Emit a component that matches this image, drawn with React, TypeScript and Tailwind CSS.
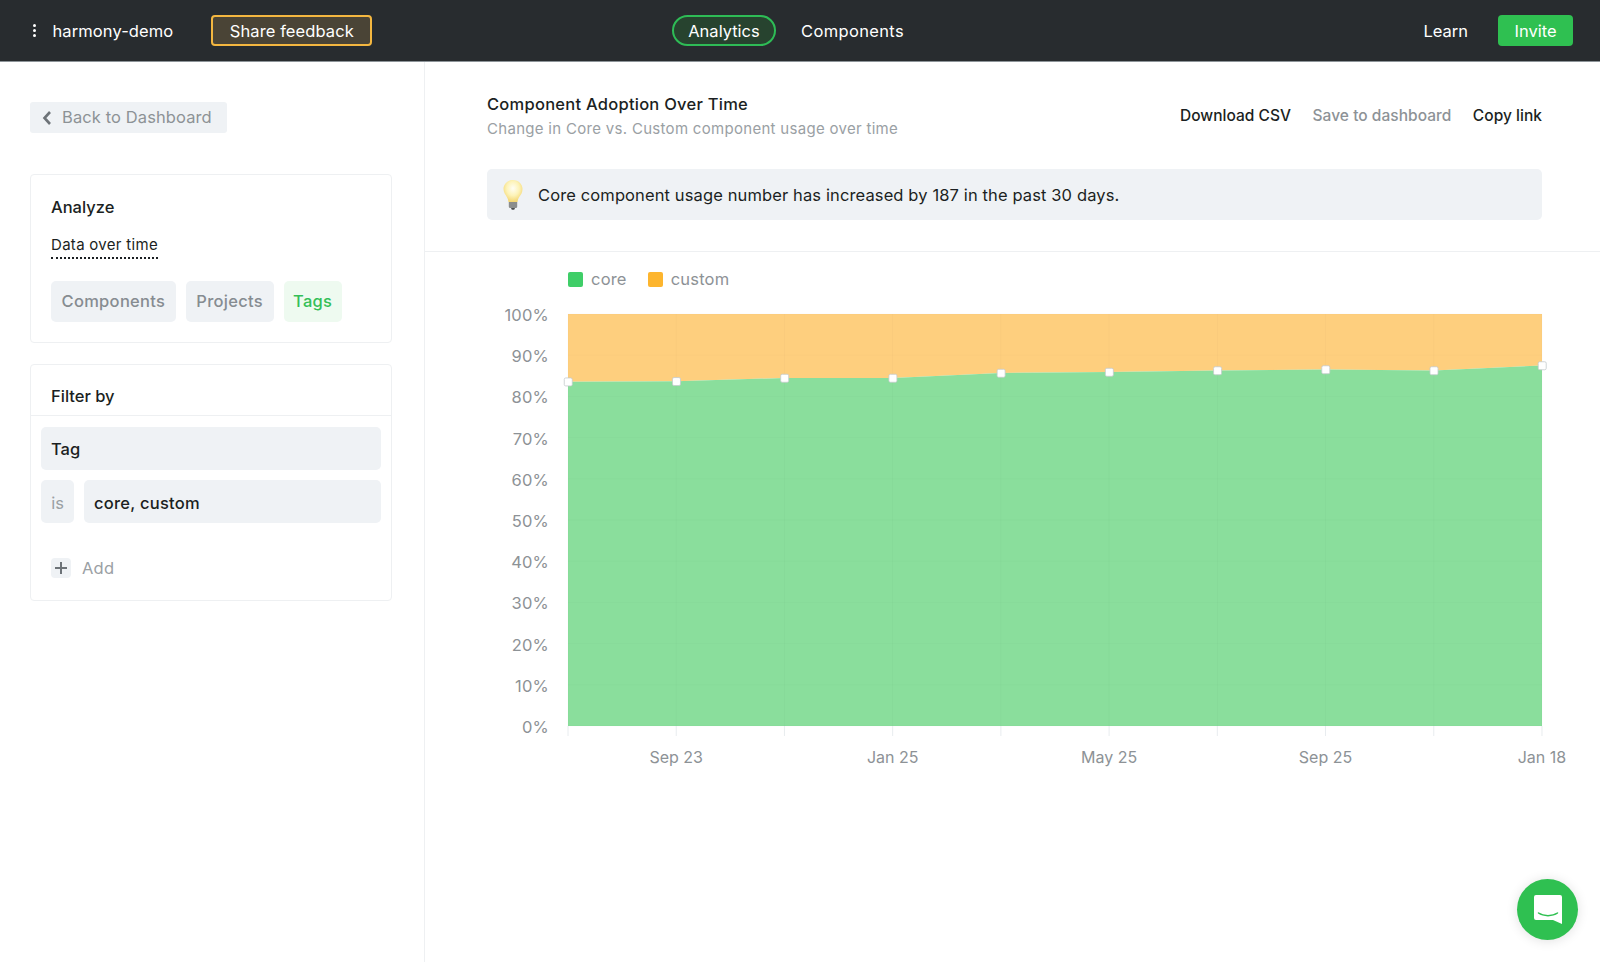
import React from "react";

const font = { fontFamily: "Inter, 'Liberation Sans', sans-serif" };
const xs = Array.from({ length: 10 }, (_, i) => 568 + i * 108.22);
const ys = [381.7, 381.3, 378, 378, 373, 372, 370.5, 369.5, 370.5, 365.5];
const x0 = 568;
const x1 = 1542;
const yTop = 314;
const yBot = 726;
const line = xs.map((x, i) => `${x},${ys[i]}`).join(" ");
const yLabels = ["100%", "90%", "80%", "70%", "60%", "50%", "40%", "30%", "20%", "10%", "0%"];
const xLabels: [number, string][] = [[1, "Sep 23"], [3, "Jan 25"], [5, "May 25"], [7, "Sep 25"], [9, "Jan 18"]];

function Chart() {
  return (
    <svg width="1175" height="500" viewBox="425 294 1175 500" className="block">
      <polygon points={`${x0},${yTop} ${x1},${yTop} ${x1},${ys[9]} ${[...xs].reverse().map((x, i) => `${x},${ys[9 - i]}`).join(" ")}`} fill="#fecf7e" />
      <polygon points={`${line} ${x1},${yBot} ${x0},${yBot}`} fill="#8ade9c" />
      {yLabels.map((_, i) => (
        <line key={i} x1={x0} x2={x1} y1={yTop + i * 41.2} y2={yTop + i * 41.2} stroke="#000" strokeOpacity="0.015" />
      ))}
      {xs.map((x, i) => (
        <g key={i}>
          <line x1={x} x2={x} y1={yTop} y2={yBot} stroke="#000" strokeOpacity="0.02" />
          <line x1={x} x2={x} y1={yBot} y2={yBot + 10} stroke="#e8ecef" />
        </g>
      ))}
      {yLabels.map((t, i) => (
        <text key={t} x="549" y={yTop + i * 41.2 + 7} textAnchor="end" fontSize="16.5" letterSpacing="0.2" fill="#8d9296" style={font}>{t}</text>
      ))}
      {xLabels.map(([i, t]) => (
        <text key={t} x={xs[i]} y="763" textAnchor="middle" fontSize="16" fill="#8d9296" style={font}>{t}</text>
      ))}
      {xs.map((x, i) => (
        <rect key={i} x={x - 3.75} y={ys[i] - 3.75} width="8" height="8" rx="1.5" fill="#fff" stroke="#c4cacd" strokeWidth="0.8" />
      ))}
    </svg>
  );
}

function Bulb() {
  return (
    <svg width="22" height="32" viewBox="0 0 22 32">
      <defs>
        <radialGradient id="bulb" cx="50%" cy="38%" r="60%">
          <stop offset="0%" stopColor="#fffef4" />
          <stop offset="55%" stopColor="#fdf3b8" />
          <stop offset="100%" stopColor="#f4d774" />
        </radialGradient>
      </defs>
      <path d="M11 1C5.500 1 1.500 5 1.500 10c0 3.600 2.300 6 3.600 8.400.9 1.600 1.200 3 1.400 4.600h9c.2-1.600.5-3 1.400-4.600C18.800 16 20.500 13.600 20.500 10 20.500 5 16.500 1 11 1z" fill="url(#bulb)" />
      <path d="M6.800 23h8.400v4.500c0 1-.8 1.500-1.700 1.500h-5c-.9 0-1.700-.5-1.700-1.500z" fill="#8b8d8c" />
      <path d="M9 29h4l-.8 1.800H9.800z" fill="#4b4d4e" />
    </svg>
  );
}

export default function App() {
  return (
    <div className="w-[1600px] h-[962px] overflow-hidden bg-white text-[#1b1f22] flex flex-col" style={font}>
      <header className="h-[62px] shrink-0 bg-[#282c2f] border-b border-[#8d9499] flex items-center text-white text-[16.5px] relative">
        <div className="flex items-center w-[620px] pl-[33px]">
          <span className="flex flex-col gap-[2.5px] mr-[17px]">
            <i className="block size-[2.5px] rounded-full bg-white" />
            <i className="block size-[2.5px] rounded-full bg-white" />
            <i className="block size-[2.5px] rounded-full bg-white" />
          </span>
          <span className="tracking-[0.1px] pt-[1px]">harmony-demo</span>
          <span className="ml-[38px] h-[31px] w-[161px] flex items-center justify-center rounded-[4px] border-2 border-[#f4b740] bg-[#4a4436] tracking-[0.1px] pt-[1px]">Share feedback</span>
        </div>
        <div className="flex items-center ml-[52px]">
          <span className="h-[31px] w-[104px] flex items-center justify-center rounded-full border-2 border-[#2ebc56] bg-[#27432f] pt-[1px]">Analytics</span>
          <span className="ml-[25px] tracking-[0.35px] pt-[1px]">Components</span>
        </div>
        <div className="ml-auto flex items-center pr-[27px]">
          <span className="pt-[1px]">Learn</span>
          <span className="ml-[30px] h-[31px] w-[75px] flex items-center justify-center rounded-[4px] bg-[#2fc051] pt-[1px]">Invite</span>
        </div>
      </header>

      <div className="flex flex-1 min-h-0">
        <aside className="w-[425px] shrink-0 border-r border-[#eef0f2] pt-[40px] pl-[30px] pr-[32px]">
          <div className="h-[31px] w-[197px] rounded-[3px] bg-[#eff2f5] flex items-center text-[#8d9296] text-[16.5px] tracking-[0.1px]">
            <svg width="12" height="16" viewBox="0 0 12 16" className="ml-[11px] mr-[9px]" fill="none" stroke="#6d7378" strokeWidth="2.600">
              <path d="M9 2 3.500 8 9 14" />
            </svg>
            Back to Dashboard
          </div>

          <section className="mt-[41px] h-[169px] rounded-[4px] border border-[#eef0f2] px-[21px] pt-[22px]">
            <div className="text-[16.5px] font-medium leading-[20px] -ml-[1px]">Analyze</div>
            <div className="mt-[18px] -ml-[1px] w-fit text-[15px] leading-[20px] tracking-[0.3px] border-b-2 border-dotted border-[#1b1f22] pb-[2px]">Data over time</div>
            <div className="mt-[22px] -ml-[1px] flex gap-[10px] text-[16.5px] font-medium tracking-[0.3px]">
              <span className="h-[41px] px-[10.5px] flex items-center rounded-[5px] bg-[#eff2f5] text-[#868c91]">Components</span>
              <span className="h-[41px] px-[10.5px] flex items-center rounded-[5px] bg-[#eff2f5] text-[#868c91]">Projects</span>
              <span className="h-[41px] px-[9.5px] flex items-center rounded-[5px] bg-[#eefaf0] text-[#34bf58]">Tags</span>
            </div>
          </section>

          <section className="mt-[21px] h-[237px] rounded-[4px] border border-[#eef0f2]">
            <div className="h-[51px] border-b border-[#eef0f2] px-[20px] pt-[21px] text-[16.5px] font-medium leading-[20px]">Filter by</div>
            <div className="px-[10px] pt-[11px] flex flex-col gap-[10px] text-[16.5px] font-medium">
              <div className="h-[43px] rounded-[5px] bg-[#eff2f5] flex items-center px-[10px] pt-[2px]">Tag</div>
              <div className="flex gap-[10px]">
                <div className="h-[43px] w-[33px] rounded-[5px] bg-[#eff2f5] flex items-center justify-center font-normal text-[#9aa0a4] pt-[3px]">is</div>
                <div className="h-[43px] flex-1 rounded-[5px] bg-[#eff2f5] flex items-center px-[10px] tracking-[0.25px] pt-[3px]">core, custom</div>
              </div>
            </div>
            <div className="mt-[33px] ml-[20px] flex items-center gap-[11px] text-[#9aa0a4] text-[16.5px] tracking-[0.2px]">
              <span className="size-[20px] rounded-[4px] bg-[#eff2f5] flex items-center justify-center">
                <svg width="12" height="12" viewBox="0 0 12 12" stroke="#6d7378" strokeWidth="2"><path d="M6 0v12M0 6h12" /></svg>
              </span>
              <span>Add</span>
            </div>
          </section>
        </aside>

        <main className="flex-1 min-w-0 relative">
          <div className="h-[190px] border-b border-[#eef0f2] pl-[62px] pr-[58px] pt-[32px]">
            <div className="flex justify-between items-center">
              <div>
                <div className="text-[16.5px] font-medium leading-[20px] tracking-[0.25px]">Component Adoption Over Time</div>
                <div className="mt-[5px] text-[15px] leading-[20px] tracking-[0.3px] text-[#9aa0a4]">Change in Core vs. Custom component usage over time</div>
              </div>
              <div className="flex gap-[21.5px] text-[15.5px] font-medium tracking-[0.03px] -mt-[2px]">
                <span>Download CSV</span>
                <span className="text-[#8d9296]">Save to dashboard</span>
                <span>Copy link</span>
              </div>
            </div>
            <div className="mt-[30px] h-[51px] rounded-[5px] bg-[#eff2f5] flex items-center pl-[15px] text-[16.5px] tracking-[0.12px]">
              <Bulb />
              <span className="ml-[14px] pt-[1px]">Core component usage number has increased by 187 in the past 30 days.</span>
            </div>
          </div>
          <div className="flex items-center h-[29px] mt-[13px] pl-[143px] text-[16.5px] text-[#8d9296] tracking-[0.2px]">
            <i className="size-[15px] rounded-[2px] bg-[#3fce68] -mt-[1px]" />
            <span className="ml-[8px]">core</span>
            <i className="ml-[21px] size-[15px] rounded-[2px] bg-[#fdb52e] -mt-[1px]" />
            <span className="ml-[8px]">custom</span>
          </div>
          <Chart />
          <button className="absolute right-[22px] bottom-[22px] size-[61px] rounded-full bg-[#2fc051] flex items-center justify-center shadow-[0_1px_12px_rgba(0,0,0,0.12)]">
            <svg width="28" height="32" viewBox="0 0 28 32">
              <path d="M2 1h24a2 2 0 0 1 2 2v27l-9-4H2a2 2 0 0 1-2-2V3a2 2 0 0 1 2-2z" fill="#fff" />
              <path d="M4.500 19c5 3.500 14 3.500 19 0" fill="none" stroke="#2fc051" strokeWidth="1.500" strokeLinecap="round" />
            </svg>
          </button>
        </main>
      </div>
    </div>
  );
}
